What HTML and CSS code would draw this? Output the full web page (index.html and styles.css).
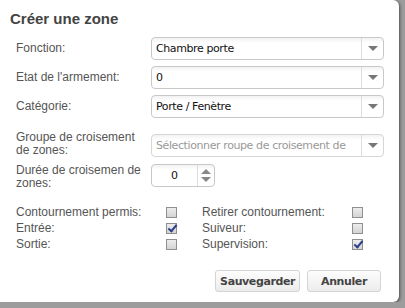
FILE: index.html
```html
<!DOCTYPE html>
<html lang="fr">
<head>
    <meta charset="UTF-8">
    <title>Créer une zone</title>
    <link rel="stylesheet" href="styles.css">
</head>
<body>
    <div class="dialog">

        <header class="dialog-head">
            <h1>Créer une zone</h1>
        </header>

        <section class="fields">
            <label class="field-label">Fonction:</label>
            <div class="select">
                <span class="select-value">Chambre porte</span>
                <span class="select-arrow"></span>
            </div>

            <label class="field-label">Etat de l'armement:</label>
            <div class="select">
                <span class="select-value">0</span>
                <span class="select-arrow"></span>
            </div>

            <label class="field-label">Catégorie:</label>
            <div class="select">
                <span class="select-value">Porte / Fenètre</span>
                <span class="select-arrow"></span>
            </div>

            <label class="field-label two-lines group-label">Groupe de croisement de zones:</label>
            <div class="select disabled group-select">
                <span class="select-value placeholder">Sélectionner roupe de croisement de</span>
                <span class="select-arrow"></span>
            </div>

            <label class="field-label two-lines duree-label">Durée de croisemen de zones:</label>
            <div class="spinner">
                <span class="spinner-value">0</span>
                <span class="spinner-arrows">
                    <span class="spin-up"></span>
                    <span class="spin-down"></span>
                </span>
            </div>
        </section>

        <section class="checks">
            <div class="check-col">
                <div class="check-row"><span class="check-label">Contournement permis:</span><span class="box"></span></div>
                <div class="check-row"><span class="check-label">Entrée:</span><span class="box checked"></span></div>
                <div class="check-row"><span class="check-label">Sortie:</span><span class="box"></span></div>
            </div>
            <div class="check-col">
                <div class="check-row"><span class="check-label">Retirer contournement:</span><span class="box"></span></div>
                <div class="check-row"><span class="check-label">Suiveur:</span><span class="box"></span></div>
                <div class="check-row"><span class="check-label">Supervision:</span><span class="box checked"></span></div>
            </div>
        </section>

        <footer class="actions">
            <button>Sauvegarder</button>
            <button class="cancel">Annuler</button>
        </footer>

    </div>
</body>
</html>
```

FILE: styles.css
```css
* {
    box-sizing: border-box;
}

body {
    margin: 0;
    background: #9c9c9c;
    font-family: "Liberation Sans", Arial, sans-serif;
    overflow: hidden;
}

.dialog {
    width: 399px;
    height: 302px;
    background: #fff;
    border-radius: 0 6px 6px 0;
    box-shadow: 1px 1px 3px rgba(0, 0, 0, 0.5);
}

.dialog-head {
    padding: 10px 10px 0 10px;
    height: 37px;
}

.dialog-head h1 {
    margin: 0;
    font-size: 15px;
    line-height: 18px;
    font-weight: bold;
    color: #444;
}

.fields {
    display: grid;
    grid-template-columns: 135px 233px;
    row-gap: 6px;
    padding-left: 16px;
}

.field-label {
    font-size: 12px;
    color: #555;
    align-self: center;
    line-height: 13px;
}

.two-lines {
    align-self: start;
    padding-right: 6px;
}

.group-label {
    margin-top: 7px;
}

.duree-label {
    margin-top: 1px;
}

.group-select {
    margin-top: 10px;
}

.select {
    height: 23px;
    border: 1px solid #c8c8c8;
    border-radius: 4px;
    background: linear-gradient(#f2f2f2, #fff 5px);
    display: flex;
    align-items: center;
    overflow: hidden;
}

.select-value {
    flex: 1;
    padding-left: 4px;
    font-family: "DejaVu Sans", Verdana, sans-serif;
    font-size: 11px;
    letter-spacing: -0.4px;
    color: #111;
    white-space: nowrap;
    overflow: hidden;
}

.select-value.placeholder {
    color: #999;
}

.select.disabled {
    border-color: #d6d6d6;
}

.select-arrow {
    width: 22px;
    height: 100%;
    border-left: 1px solid #ddd;
    position: relative;
}

.select-arrow::after {
    content: "";
    position: absolute;
    left: 6px;
    top: 8px;
    border-left: 5px solid transparent;
    border-right: 5px solid transparent;
    border-top: 5px solid #777;
}

.spinner {
    margin-top: 1px;
    width: 64px;
    height: 23px;
    border: 1px solid #c8c8c8;
    border-radius: 4px;
    background: linear-gradient(#f2f2f2, #fff 5px);
    display: flex;
}

.spinner-value {
    width: 45px;
    text-align: center;
    font-family: "DejaVu Sans", Verdana, sans-serif;
    font-size: 11px;
    line-height: 21px;
    color: #111;
}

.spinner-arrows {
    flex: 1;
    border-left: 1px solid #ddd;
    display: flex;
    flex-direction: column;
    align-items: center;
    justify-content: center;
    gap: 3px;
}

.spin-up {
    border-left: 5px solid transparent;
    border-right: 5px solid transparent;
    border-bottom: 5px solid #888;
}

.spin-down {
    border-left: 5px solid transparent;
    border-right: 5px solid transparent;
    border-top: 5px solid #888;
}

.checks {
    display: flex;
    padding: 14px 0 0 16px;
}

.check-col {
    width: 186px;
}

.check-row {
    display: flex;
    align-items: center;
    height: 16px;
}

.check-label {
    width: 150px;
    font-size: 12px;
    color: #555;
}

.box {
    width: 11px;
    height: 11px;
    border: 1px solid #8f8f8f;
    background: linear-gradient(#ececec, #d4d4d4);
    position: relative;
}

.box.checked::after {
    content: "";
    position: absolute;
    left: 3px;
    top: -1px;
    width: 3px;
    height: 7px;
    border-right: 2px solid #2b3f86;
    border-bottom: 2px solid #2b3f86;
    transform: rotate(40deg);
}

.actions {
    display: flex;
    justify-content: flex-end;
    gap: 7px;
    padding: 18px 18px 0 0;
}

button {
    height: 22px;
    padding: 0 4px;
    border: 1px solid #d4d4d4;
    border-radius: 3px;
    background: linear-gradient(#fdfdfd, #ececec);
    font-family: "DejaVu Sans", Verdana, sans-serif;
    font-size: 11px;
    font-weight: bold;
    letter-spacing: -0.4px;
    color: #444;
}

button.cancel {
    width: 74px;
}
```
